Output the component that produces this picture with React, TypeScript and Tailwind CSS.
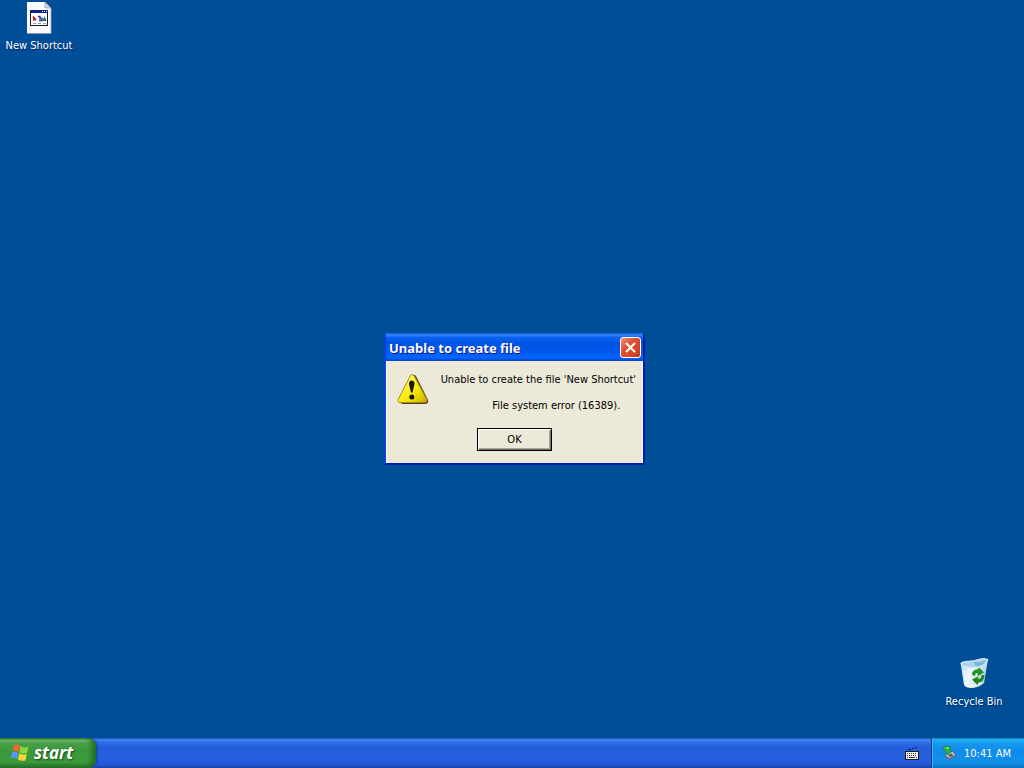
import React from "react";

function ShortcutIcon() {
  return (
    <svg className="shrink-0" width="32" height="32" viewBox="0 0 32 32" aria-hidden="true">
      <path d="M4 0H22L28 6V31H4Z" fill="#fafbfd" />
      <path d="M22 0V6H28Z" fill="#cfd8e6" stroke="#6f87a8" strokeWidth="0.6" />
      <path d="M28 6V31.5H4" fill="none" stroke="#9fa9ba" strokeWidth="0.8" />
      <rect x="7.500" y="8.500" width="17" height="15" fill="#fff" stroke="#1b1b2c" />
      <rect x="8" y="8" width="17" height="3" fill="#101d8c" />
      <path d="M19 9.500h1m1 0h1m1 0h1" stroke="#fff" />
      <path d="M10 14.500l3 3.500M10 17.500h2" stroke="#b51e20" strokeWidth="1.8" />
      <path d="M15 14.500h2v2h2v2h-3" stroke="#2437b0" strokeWidth="1.5" fill="none" />
      <path d="M21.500 14l2 5h-4z" fill="#1f6d65" />
      <path d="M10 21.500h3m2 0h3m2 0h3" stroke="#9d9da8" />
    </svg>
  );
}

function RecycleBinIcon() {
  return (
    <svg className="shrink-0" width="32" height="32" viewBox="0 0 32 32" aria-hidden="true">
      <defs>
        <linearGradient id="bin" x1="0" x2="1" y1="0" y2="0.3">
          <stop offset="0" stopColor="#a3d0ed" />
          <stop offset="0.45" stopColor="#eef9fd" />
          <stop offset="1" stopColor="#b3d2e4" />
        </linearGradient>
      </defs>
      <path d="M2.500 5C7 2 15 4 20 1.500Q26 -0.500 30 1.500L26 25Q22 29 15 30Q8 30.500 6 27Z" fill="url(#bin)" />
      <path d="M3 5C7 2 15 4 20 1.500Q26 -0.500 30 1.500Q28 7 23 8.500Q15 11 8 9Q3 8 3 5Z" fill="#a9d5ef" stroke="#e5f6fe" strokeWidth="0.8" />
      <path d="M16 4Q23 4 28 2.500Q26 6.500 20 8.500Q16 7 16 4Z" fill="#7db6dd" />
      <path d="M6 12L8.500 27Q14 30 24 25" stroke="#fff" strokeWidth="1.5" fill="none" opacity="0.7" />
      <path d="M14 17Q14 11.500 19.500 11.500L21 9.500L26 14.500L20 18L19.500 15Q17 15 17 18Z" fill="#239323" />
      <path d="M26.500 17Q26 24.500 20.500 24.500L19.500 27L14 21.500L20 18.500L20.500 21Q23.500 21 23.500 17Z" fill="#1e861e" />
    </svg>
  );
}

function WarningIcon() {
  return (
    <svg className="shrink-0" width="32" height="32" viewBox="0 0 32 32" aria-hidden="true">
      <defs>
        <linearGradient id="warn" x1="0" y1="0" x2="1" y2="1">
          <stop offset="0.2" stopColor="#fff663" />
          <stop offset="0.6" stopColor="#f9e900" />
          <stop offset="1" stopColor="#c7a600" />
        </linearGradient>
      </defs>
      <path d="M16 2Q18 1 19.500 4L31 27Q32 31 28 31H5L3 29Z" fill="#343118" opacity="0.9" />
      <path d="M13 3.500Q15 -0.500 17.500 3.500L29.500 26Q31 29.500 27.500 29.500H3Q0 29.500 1.500 26Z" fill="url(#warn)" stroke="#a88d0b" />
      <path d="M12 11Q12 7.500 14.800 7.500Q17.500 7.500 17.500 11L15.500 19.500H14Z" fill="#171608" />
      <circle cx="14.800" cy="24" r="2.500" fill="#171608" />
    </svg>
  );
}

function WindowsLogo() {
  return (
    <svg className="shrink-0" width="20" height="18" viewBox="0 0 20 18" aria-hidden="true">
      <path d="M4 1Q7 -0.500 9.800 1.500L8.500 8Q5.500 6 2.500 7.500Z" fill="#f06a2d" />
      <path d="M10.500 2Q14 4.500 18.500 2.500L17 9Q13 10.500 9.300 8.500Z" fill="#8bd53f" />
      <path d="M2.200 8.500Q5 7 8.200 9L7 15Q4 12.500 0.500 14.500Z" fill="#5599ff" />
      <path d="M9.200 9.500Q13 11.500 16.800 10L15.300 16.500Q12 17.500 8 15.500Z" fill="#ffd638" />
    </svg>
  );
}

function KeyboardIcon() {
  return (
    <svg className="shrink-0" width="14" height="14" viewBox="0 0 14 14" aria-hidden="true">
      <path d="M3 3.500h3m1 -1h2m1 -1h2" fill="none" stroke="#10204f" />
      <rect x="0.500" y="5.500" width="13" height="8" fill="#f6f3e6" stroke="#171c35" />
      <path d="M2 7.500h10M2 9.500h10" stroke="#33333a" strokeDasharray="1 1" />
      <path d="M2 11.500h1m1 0h6m1 0h1" stroke="#33333a" />
    </svg>
  );
}

function RemoveHardwareIcon() {
  return (
    <svg className="shrink-0" width="16" height="16" viewBox="0 0 16 16" aria-hidden="true">
      <path d="M3 10L10 6L14 10L7 13.500Z" fill="#c9cfd0" stroke="#4e5b64" strokeWidth="0.8" />
      <path d="M3 10V11.500L7 15L14 11.500V10L7 13.500Z" fill="#626f77" />
      <path d="M6 10.500L9.500 8.500L11.500 10L8 12Z" fill="#455860" />
      <path d="M1 2L8 1V6L10 6.500L6 10L4 6.500L1 3.500Z" fill="#2fb53c" stroke="#16722d" strokeWidth="0.6" />
      <path d="M2.500 2.500L7 2V4.500Z" fill="#7be36e" />
    </svg>
  );
}

export default function App() {
  return (
    <div className="flex min-h-screen flex-col bg-[#004e98] font-['DejaVu_Sans_Condensed','DejaVu_Sans',sans-serif] text-[11px] leading-[13px] text-black">
      <main className="relative flex-1">
        <button type="button" className="absolute left-0 top-0 flex w-[78px] flex-col items-center gap-[5px] pt-[2px] text-white [text-shadow:1px_1px_1px_#002a5c]">
          <ShortcutIcon />
          <span className="whitespace-nowrap">New Shortcut</span>
        </button>

        <button type="button" className="absolute bottom-[30px] right-[12px] flex w-[76px] flex-col items-center gap-[5px] text-white [text-shadow:1px_1px_1px_#002a5c]">
          <RecycleBinIcon />
          <span className="whitespace-nowrap">Recycle Bin</span>
        </button>

        <section
          role="dialog"
          aria-labelledby="dialog-title"
          className="absolute left-[384px] top-[333px] flex w-[261px] flex-col rounded-t-[4px] border-x-2 border-b-2 border-l-[#0a42d8] border-r-[#001fae] border-b-[#001fa8] bg-[#ece9d8]"
        >
          <header className="flex h-[28px] items-center justify-between rounded-t-[2px] bg-[linear-gradient(180deg,#0a55dc_0%,#3288fa_7%,#0b62f2_16%,#0054e3_35%,#0058ec_65%,#0366ff_88%,#0043cd_100%)] pl-[3px] pr-[2px] pt-px">
            <h1 id="dialog-title" className="whitespace-nowrap font-['Noto_Sans',sans-serif] text-[13px] font-bold leading-[16px] text-white [text-shadow:1px_1px_0_#0f1089]">
              Unable to create file
            </h1>
            <button type="button" aria-label="Close" className="flex size-[21px] items-center justify-center rounded-[3px] border border-white bg-[linear-gradient(135deg,#ef9079_0%,#dd5233_40%,#d64420_75%,#b93414_100%)]">
              <svg width="13" height="13" viewBox="0 0 13 13" aria-hidden="true">
                <path d="M2 2L11 11M11 2L2 11" stroke="#fff" strokeWidth="2" />
              </svg>
            </button>
          </header>
          <div className="flex flex-col items-center border-x border-white/70 pb-[12px] pt-[12px]">
            <div className="flex w-full justify-between pl-[10px] pr-[6px]">
              <WarningIcon />
              <div className="flex flex-col gap-[13px] text-center">
                <p className="whitespace-nowrap">Unable to create the file 'New Shortcut'</p>
                <p className="pl-[36px]">File system error (16389).</p>
              </div>
            </div>
            <button type="button" className="mt-[16px] h-[23px] w-[75px] border border-black bg-[#ece9d8] shadow-[inset_1px_1px_0_#fff,inset_-1px_-1px_0_#716f64,inset_-2px_-2px_0_#aca899]">
              OK
            </button>
          </div>
        </section>
      </main>

      <footer className="flex h-[30px] bg-[linear-gradient(180deg,#1f4fc0_0%,#3f8cf3_7%,#2f6de8_14%,#245edb_30%,#245edc_80%,#2058cf_90%,#1941a5_100%)] text-white">
        <button type="button" className="flex w-[96px] items-center gap-[4px] rounded-r-[8px] bg-[linear-gradient(180deg,#357c38_0%,#71b871_8%,#46a046_18%,#3a973a_45%,#3c9b3c_80%,#2b762b_100%)] pl-[10px] shadow-[inset_-4px_-1px_5px_#236c26,1px_0_2px_#173f91]">
          <WindowsLogo />
          <span className="font-['Open_Sans',sans-serif] text-[17px] font-bold italic leading-[24px] [text-shadow:1px_1px_2px_#174917]">start</span>
        </button>
        <div className="flex flex-1 items-center justify-end pr-[12px]">
          <KeyboardIcon />
        </div>
        <div className="flex w-[93px] items-center gap-[6px] border-l border-[#0a347f] bg-[linear-gradient(180deg,#1477c8_0%,#24b4f5_7%,#149aee_17%,#0f8bea_45%,#1291ea_80%,#0d72c3_100%)] pl-[10px] shadow-[inset_1px_0_0_#32bbf7]">
          <RemoveHardwareIcon />
          <time className="whitespace-nowrap">10:41 AM</time>
        </div>
      </footer>
    </div>
  );
}
